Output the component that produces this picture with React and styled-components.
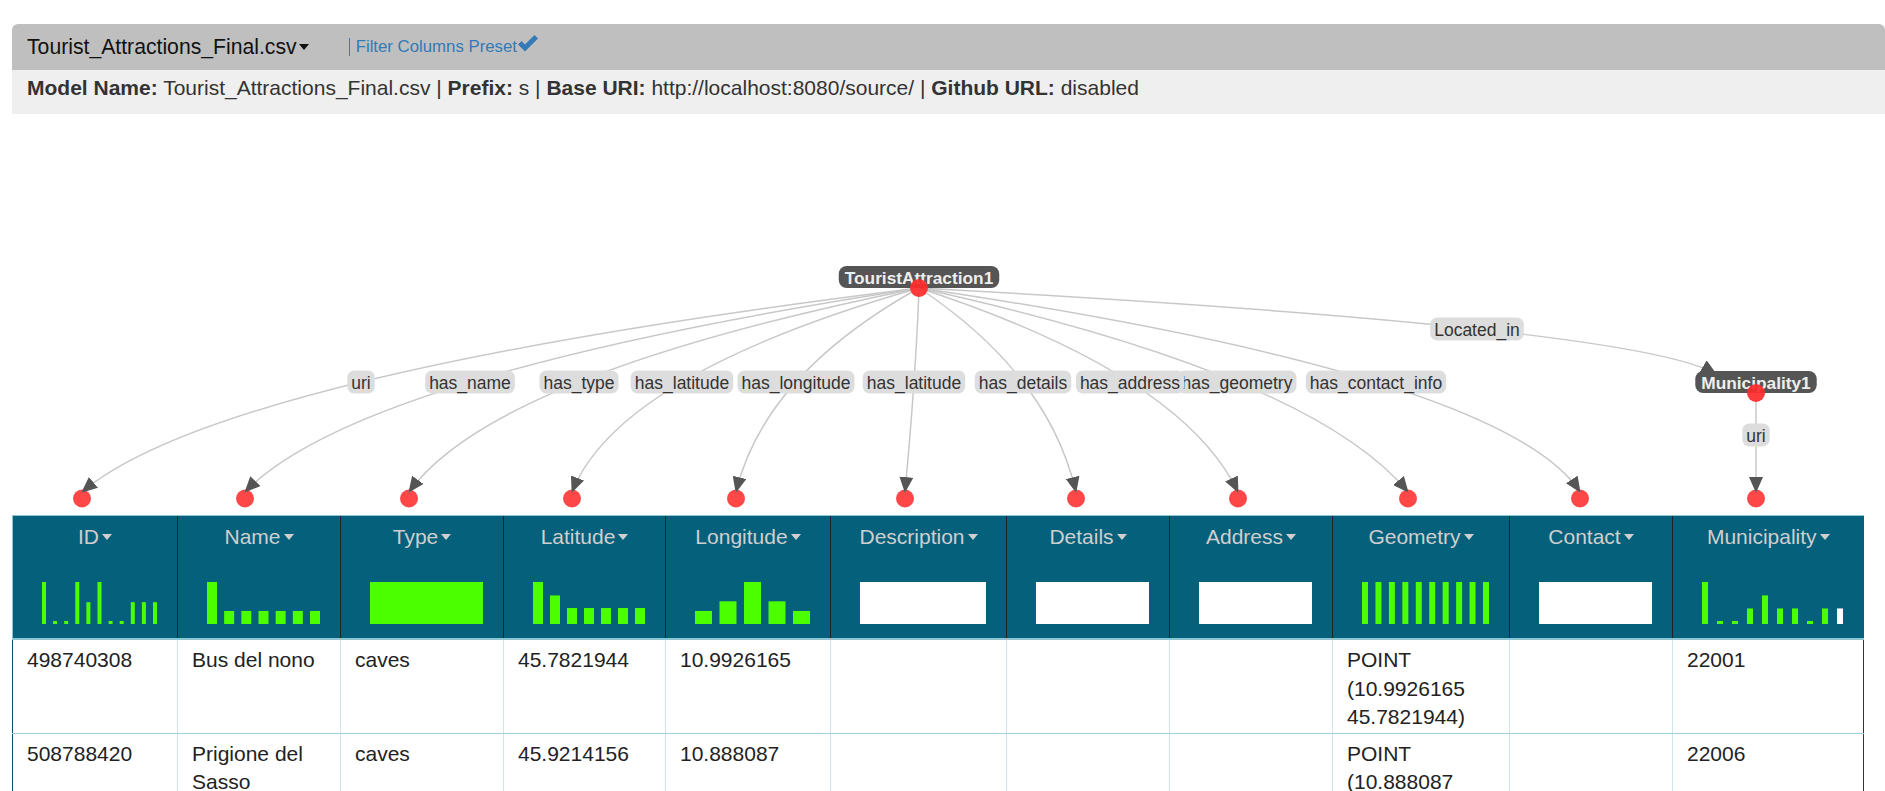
import React from "react";
import styled, { createGlobalStyle } from "styled-components";

const GREEN = "#4cff00";
const TEAL = "#04607b";
const FONT = '"Liberation Sans", Arial, Helvetica, sans-serif';

const GlobalStyle = createGlobalStyle`
  html, body {
    margin: 0;
    padding: 0;
    background: #fff;
  }
  body {
    font-family: ${FONT};
    color: #222;
  }
  * {
    box-sizing: border-box;
  }
`;

const Page = styled.div`
  padding: 24px 0 0 12px;
`;

const TopBar = styled.div`
  display: flex;
  align-items: center;
  height: 46px;
  padding: 0 15px;
  background: #bfbfbf;
  border-radius: 6px 6px 0 0;
`;

const FileName = styled.span`
  display: flex;
  align-items: center;
  font-size: 21.2px;
  color: #111;
`;

const Caret = styled.span`
  display: inline-block;
  width: 0;
  height: 0;
  margin-left: ${({ gap }) => gap}px;
  border-left: ${({ size }) => size}px solid transparent;
  border-right: ${({ size }) => size}px solid transparent;
  border-top: ${({ size }) => size + 1}px solid ${({ color }) => color};
`;

const FilterLink = styled.a`
  display: flex;
  align-items: center;
  margin-left: 40px;
  padding-left: 6px;
  border-left: 1.5px solid #337ab7;
  color: #337ab7;
  font-size: 16.8px;
  line-height: 18px;
  text-decoration: none;
`;

const Check = styled.svg`
  margin-top: -7px;
`;

const InfoBar = styled.div`
  height: 44px;
  padding: 4px 15px 0;
  background: #efefef;
  font-size: 21px;
  line-height: 28px;
  color: #333;
`;

const Graph = styled.svg`
  display: block;
  width: 1861px;
  height: 401px;
`;

const EdgePath = styled.path`
  fill: none;
  stroke: #c8c8c8;
  stroke-width: 1.5;
`;

const LabelText = styled.text`
  font-family: ${FONT};
  font-size: 17.5px;
  fill: #333;
`;

const NodeText = styled.text`
  font-family: ${FONT};
  font-size: 17.3px;
  font-weight: bold;
  fill: #eee;
`;

const Table = styled.table`
  width: 1851px;
  table-layout: fixed;
  border-collapse: collapse;
`;

const HeadCell = styled.th`
  padding: 7px 0 14px;
  background: ${TEAL};
  border-top: 1px solid #8fc6d4;
  border-bottom: 2px solid #8fc6d4;
  border-left: 1px solid ${({ first }) => (first ? "#8fc6d4" : "#222")};
  font-weight: normal;
  vertical-align: top;
`;

const HeadTitle = styled.div`
  display: flex;
  justify-content: center;
  align-items: center;
  font-size: 21px;
  line-height: 28px;
  color: #cfcfcf;
`;

const HistWrap = styled.div`
  display: flex;
  margin-top: 31px;
  padding-left: 29px;
`;

const Cell = styled.td`
  padding: 6px 14px 1px;
  vertical-align: top;
  font-size: 21px;
  line-height: 28.5px;
  color: #222;
  border-left: 1px solid #cfe5ec;
  border-bottom: 1px solid #9fcfdc;

  &:first-child {
    border-left: 1px solid #0b4f63;
  }
  &:last-child {
    border-right: 1px solid #333;
  }
`;

const columns = [
  { name: "ID", w: 165, hist: { bw: 4, h: [1, 0.07, 0.07, 1, 0.52, 1, 0.07, 0.07, 0.52, 0.52, 0.52] } },
  { name: "Name", w: 163, hist: { bw: 10, h: [1, 0.31, 0.31, 0.31, 0.31, 0.31, 0.31] } },
  { name: "Type", w: 163, hist: { block: GREEN } },
  { name: "Latitude", w: 162, hist: { bw: 10, h: [1, 0.68, 0.38, 0.38, 0.38, 0.38, 0.38] } },
  { name: "Longitude", w: 165, hist: { bw: 17, h: [0.31, 0.54, 1, 0.54, 0.31] } },
  { name: "Description", w: 176, hist: { block: "#fff" } },
  { name: "Details", w: 163, hist: { block: "#fff" } },
  { name: "Address", w: 163, hist: { block: "#fff" } },
  { name: "Geometry", w: 177, hist: { bw: 6, h: [1, 1, 1, 1, 1, 1, 1, 1, 1, 1] } },
  { name: "Contact", w: 163, hist: { block: "#fff" } },
  {
    name: "Municipality",
    w: 191,
    hist: { bw: 6, h: [1, 0.07, 0.07, 0.37, 0.68, 0.37, 0.37, 0.07, 0.37, 0.37], lastWhite: true },
  },
];

const rows = [
  ["498740308", "Bus del nono", "caves", "45.7821944", "10.9926165", "", "", "", "POINT (10.9926165 45.7821944)", "", "22001"],
  ["508788420", "Prigione del Sasso", "caves", "45.9214156", "10.888087", "", "", "", "POINT (10.888087 45.9214156)", "", "22006"],
];

const SOURCE = [919, 288];
const LABEL_Y = 382;
const TIP_Y = 492;
const DOT_Y = 498.5;

const edges = [
  { label: "uri", lx: 361, tx: 82 },
  { label: "has_name", lx: 470, tx: 245 },
  { label: "has_type", lx: 579, tx: 409 },
  { label: "has_latitude", lx: 682, tx: 572 },
  { label: "has_longitude", lx: 796, tx: 736 },
  { label: "has_latitude", lx: 914, tx: 905 },
  { label: "has_details", lx: 1023, tx: 1076 },
  { label: "has_geometry", lx: 1237, tx: 1408 },
  { label: "has_address", lx: 1130, tx: 1238 },
  { label: "has_contact_info", lx: 1376, tx: 1580 },
];

const dots = [82, 245, 409, 572, 736, 905, 1076, 1238, 1408, 1580, 1756];

let ctx;
const measure = (text, font) => {
  if (!ctx) ctx = document.createElement("canvas").getContext("2d");
  ctx.font = font;
  return ctx.measureText(text).width;
};

// quadratic curve that passes through the label point at its middle
const curve = ([sx, sy], [lx, ly], [tx, ty]) => {
  const cx = 2 * lx - (sx + tx) / 2;
  const cy = 2 * ly - (sy + ty) / 2;
  return `M${sx},${sy} Q${cx},${cy} ${tx},${ty}`;
};

const EdgeLabel = ({ x, y, text }) => {
  const w = measure(text, `17.5px ${FONT}`) + 8;
  return (
    <g>
      <rect x={x - w / 2} y={y - 11.5} width={w} height={23} rx={7} fill="#ddd" />
      <LabelText x={x} y={y + 6.5} textAnchor="middle">
        {text}
      </LabelText>
    </g>
  );
};

const NodeLabel = ({ x, y, text }) => {
  const w = measure(text, `bold 17.3px ${FONT}`) + 12;
  return (
    <g>
      <rect x={x - w / 2} y={y - 22} width={w} height={22} rx={8} fill="#555" />
      <NodeText x={x} y={y - 4.5} textAnchor="middle">
        {text}
      </NodeText>
      <circle cx={x} cy={y} r={9} fill="#ff2a2a" opacity={0.92} />
    </g>
  );
};

const Histogram = ({ width, spec }) => {
  const H = 42;
  if (spec.block) {
    return (
      <svg width={width} height={H}>
        <rect width={width} height={H} fill={spec.block} />
      </svg>
    );
  }
  const n = spec.h.length;
  return (
    <svg width={width} height={H}>
      {spec.h.map((v, i) => {
        const x = (i * (width - spec.bw)) / (n - 1);
        const hh = Math.max(3, v * H);
        const fill = spec.lastWhite && i === n - 1 ? "#fff" : GREEN;
        return <rect key={i} x={x} y={H - hh} width={spec.bw} height={hh} fill={fill} />;
      })}
    </svg>
  );
};

const SchemaGraph = () => (
  <Graph viewBox="12 114 1861 401">
    <defs>
      <marker
        id="arrow"
        viewBox="0 0 16 14"
        refX="15"
        refY="7"
        markerWidth="16"
        markerHeight="14"
        markerUnits="userSpaceOnUse"
        orient="auto"
      >
        <path d="M0,0 L16,7 L0,14 z" fill="#555" />
      </marker>
    </defs>

    {dots.map((x) => (
      <circle key={x} cx={x} cy={DOT_Y} r={9} fill="#ff4747" />
    ))}

    {edges.map((e, i) => (
      <EdgePath key={i} d={curve(SOURCE, [e.lx, LABEL_Y], [e.tx, TIP_Y])} markerEnd="url(#arrow)" />
    ))}
    <EdgePath d={curve(SOURCE, [1477, 329], [1716, 374])} markerEnd="url(#arrow)" />
    <EdgePath d={`M1756,392 L1756,${TIP_Y}`} markerEnd="url(#arrow)" />

    {edges.map((e, i) => (
      <EdgeLabel key={i} x={e.lx} y={LABEL_Y} text={e.label} />
    ))}
    <EdgeLabel x={1477} y={329} text="Located_in" />
    <EdgeLabel x={1756} y={435} text="uri" />

    <NodeLabel x={1756} y={393} text="Municipality1" />
    <NodeLabel x={919} y={288} text="TouristAttraction1" />
  </Graph>
);

const App = () => (
  <>
    <GlobalStyle />
    <Page>
      <TopBar>
        <FileName>
          Tourist_Attractions_Final.csv
          <Caret size={5} gap={2} color="#111" />
        </FileName>
        <FilterLink href="#">
          Filter Columns Preset
          <Check width="22" height="17" viewBox="0 0 22 17">
            <path d="M1 9.5 L4.5 6 L8 9.5 L17.5 0 L21 3.5 L8 16.5 Z" fill="#337ab7" />
          </Check>
        </FilterLink>
      </TopBar>
      <InfoBar>
        <b>Model Name:</b> Tourist_Attractions_Final.csv | <b>Prefix:</b> s | <b>Base URI:</b>{" "}
        http://localhost:8080/source/ | <b>Github URL:</b> disabled
      </InfoBar>

      <SchemaGraph />

      <Table>
        <colgroup>
          {columns.map((c) => (
            <col key={c.name} style={{ width: c.w }} />
          ))}
        </colgroup>
        <thead>
          <tr>
            {columns.map((c, i) => (
              <HeadCell key={c.name} first={i === 0}>
                <HeadTitle>
                  {c.name}
                  <Caret size={5} gap={3} color="#cfcfcf" />
                </HeadTitle>
                <HistWrap>
                  <Histogram width={c.w - 50} spec={c.hist} />
                </HistWrap>
              </HeadCell>
            ))}
          </tr>
        </thead>
        <tbody>
          {rows.map((r, ri) => (
            <tr key={ri}>
              {r.map((v, ci) => (
                <Cell key={ci}>{v}</Cell>
              ))}
            </tr>
          ))}
        </tbody>
      </Table>
    </Page>
  </>
);

export default App;
